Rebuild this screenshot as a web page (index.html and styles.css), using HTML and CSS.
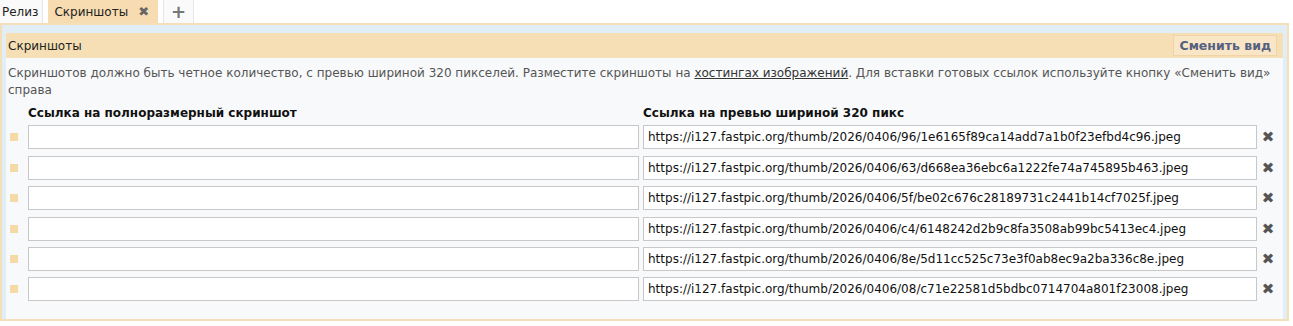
FILE: index.html
```html
<!DOCTYPE html>
<html lang="ru">
<head>
    <meta charset="UTF-8">
    <title>Скриншоты</title>
    <link rel="stylesheet" href="styles.css">
</head>
<body>
    <div class="tabs">
        <div class="tab">Релиз</div>
        <div class="tab active">Скриншоты <span class="tab-close">&#x2716;</span></div>
        <div class="tab add">+</div>
    </div>
    <div class="panel">
        <div class="panel-inner">
            <div class="panel-head">
                <span>Скриншоты</span>
                <div class="btn-view">Сменить вид</div>
            </div>
            <div class="panel-body">
                <p class="hint">Скриншотов должно быть четное количество, с превью шириной 320 пикселей. Разместите скриншоты на <a href="#">хостингах изображений</a>. Для вставки готовых ссылок используйте кнопку «Сменить вид» справа</p>
                <div class="grid">
                    <div></div>
                    <div class="col-title">Ссылка на полноразмерный скриншот</div>
                    <div class="col-title">Ссылка на превью шириной 320 пикс</div>
                    <div></div>

                    <div class="handle"></div>
                    <input class="field" type="text" value="">
                    <input class="field" type="text" value="https://i127.fastpic.org/thumb/2026/0406/96/1e6165f89ca14add7a1b0f23efbd4c96.jpeg">
                    <div class="remove">&#x2716;</div>

                    <div class="handle"></div>
                    <input class="field" type="text" value="">
                    <input class="field" type="text" value="https://i127.fastpic.org/thumb/2026/0406/63/d668ea36ebc6a1222fe74a745895b463.jpeg">
                    <div class="remove">&#x2716;</div>

                    <div class="handle"></div>
                    <input class="field" type="text" value="">
                    <input class="field" type="text" value="https://i127.fastpic.org/thumb/2026/0406/5f/be02c676c28189731c2441b14cf7025f.jpeg">
                    <div class="remove">&#x2716;</div>

                    <div class="handle"></div>
                    <input class="field" type="text" value="">
                    <input class="field" type="text" value="https://i127.fastpic.org/thumb/2026/0406/c4/6148242d2b9c8fa3508ab99bc5413ec4.jpeg">
                    <div class="remove">&#x2716;</div>

                    <div class="handle"></div>
                    <input class="field" type="text" value="">
                    <input class="field" type="text" value="https://i127.fastpic.org/thumb/2026/0406/8e/5d11cc525c73e3f0ab8ec9a2ba336c8e.jpeg">
                    <div class="remove">&#x2716;</div>

                    <div class="handle"></div>
                    <input class="field" type="text" value="">
                    <input class="field" type="text" value="https://i127.fastpic.org/thumb/2026/0406/08/c71e22581d5bdbc0714704a801f23008.jpeg">
                    <div class="remove">&#x2716;</div>
                </div>
            </div>
        </div>
    </div>
</body>
</html>
```

FILE: styles.css
```css
* {
    margin: 0;
    padding: 0;
    box-sizing: border-box;
}

body {
    font-family: "DejaVu Sans", Verdana, sans-serif;
    font-size: 12px;
    color: #222;
    background: #fff;
    width: 1289px;
}

.tabs {
    display: flex;
    gap: 5px;
    height: 23px;
    align-items: stretch;
}

.tab {
    display: flex;
    align-items: center;
    padding: 0 4px 0 2px;
    background: #fafafa;
    border-right: 1px solid #e6e6e6;
    color: #222;
}

.tab.active {
    background: #f6dcb0;
    padding: 0 9px 0 6px;
    gap: 10px;
    border-right: none;
}

.tab-close {
    font-size: 13px;
    color: #666;
}

.tab.add {
    padding: 0 7px;
    border-left: 1px solid #e6e6e6;
    font-size: 18px;
    font-weight: bold;
    color: #777;
}

.panel {
    border: 2px solid #f5dfb8;
    background: #e2eef5;
    padding: 8px 4px 0 4px;
}

.panel-inner {
    background: #f8f9fa;
}

.panel-head {
    display: flex;
    justify-content: space-between;
    align-items: center;
    background: #f6dfb4;
    height: 25px;
    padding: 0 6px 0 2px;
}

.btn-view {
    background: #f8e6c6;
    border: 1px solid #eed4a6;
    color: #556080;
    font-weight: bold;
    font-size: 12.5px;
    padding: 2px 5px;
}

.panel-body {
    padding: 7px 4px 18px 2px;
}

.hint {
    color: #555;
    line-height: 17px;
}

.hint a {
    color: #333;
}

.grid {
    display: grid;
    grid-template-columns: 20px 611px 614px 24px;
    column-gap: 4px;
    row-gap: 6.4px;
    align-items: center;
    margin-top: 7px;
    margin-left: -4px;
}

.col-title {
    font-weight: bold;
    color: #111;
    margin-bottom: -1px;
}

.handle {
    width: 8px;
    height: 8px;
    background: #f5d9a6;
    justify-self: end;
    margin-right: 6px;
}

.field {
    height: 24px;
    border: 1px solid #c8c8c8;
    background: #fff;
    font-family: "DejaVu Sans", Verdana, sans-serif;
    font-size: 12px;
    color: #111;
    padding: 0 4px;
}

.remove {
    color: #555;
    font-size: 15px;
    text-align: center;
    margin-left: -10px;
}
```
